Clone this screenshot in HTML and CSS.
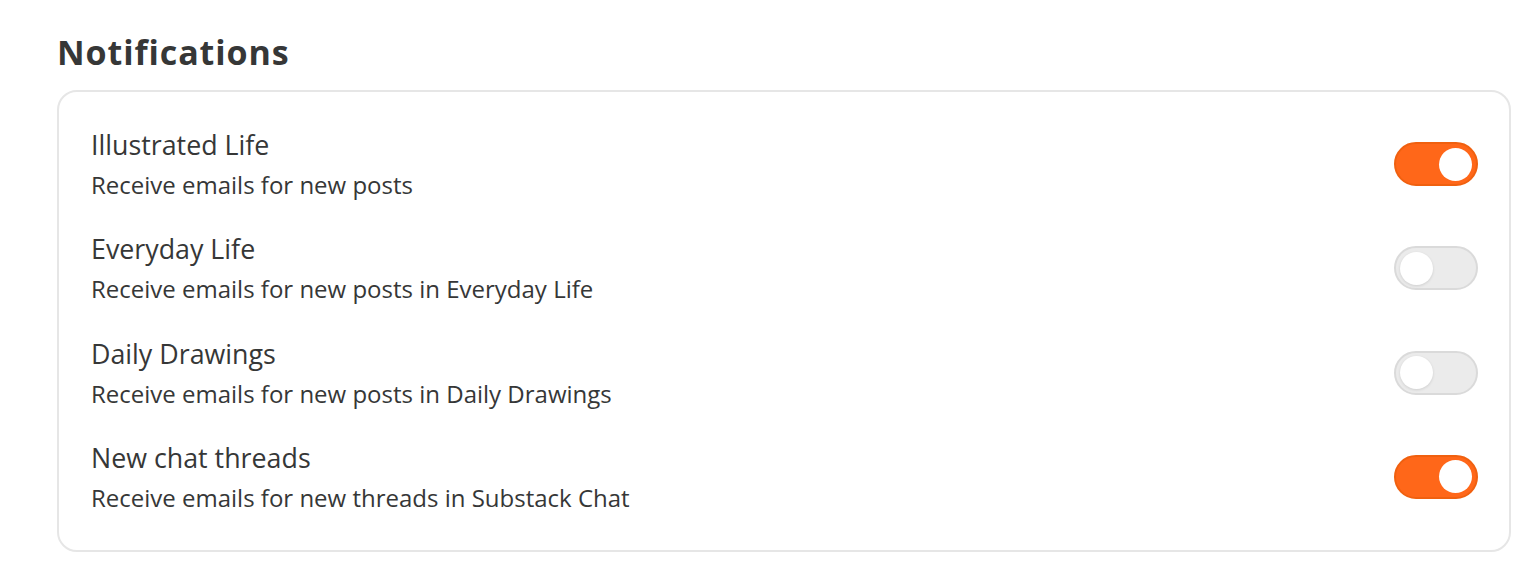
FILE: index.html
```html
<!DOCTYPE html>
<html>
<head>
<meta charset="utf-8">
<link rel="stylesheet" href="styles.css">
</head>
<body>
<div class="page">
  <h1 class="heading">Notifications</h1>
  <div class="card">
    <div class="row">
      <div class="text">
        <div class="title">Illustrated Life</div>
        <div class="desc">Receive emails for new posts</div>
      </div>
      <div class="toggle on"><div class="knob"></div></div>
    </div>
    <div class="row">
      <div class="text">
        <div class="title">Everyday Life</div>
        <div class="desc">Receive emails for new posts in Everyday Life</div>
      </div>
      <div class="toggle"><div class="knob"></div></div>
    </div>
    <div class="row">
      <div class="text">
        <div class="title">Daily Drawings</div>
        <div class="desc">Receive emails for new posts in Daily Drawings</div>
      </div>
      <div class="toggle"><div class="knob"></div></div>
    </div>
    <div class="row">
      <div class="text">
        <div class="title">New chat threads</div>
        <div class="desc">Receive emails for new threads in Substack Chat</div>
      </div>
      <div class="toggle on"><div class="knob"></div></div>
    </div>
  </div>
</div>
</body>
</html>
```
FILE: styles.css
```css
* { box-sizing: border-box; }
html, body { margin: 0; background: #fff; }
body {
  font-family: "Open Sans", "Noto Sans", "Liberation Sans", sans-serif;
  color: #363737;
}
.page {
  padding: 30px 19px 0 57px;
}
.heading {
  margin: 0 0 16px 0;
  font-size: 34px;
  font-weight: 700;
  line-height: 44px;
  letter-spacing: 0.9px;
}
.card {
  border: 2px solid #e6e6e6;
  border-radius: 20px;
  padding: 35px 31px 36px 32px;
  display: flex;
  flex-direction: column;
  gap: 30.3px;
}
.row {
  display: flex;
  align-items: center;
  justify-content: space-between;
}
.text { display: flex; flex-direction: column; gap: 6px; }
.title {
  font-size: 26.8px;
  line-height: 36px;
}
.desc {
  font-size: 24px;
  line-height: 32px;
}
.toggle {
  width: 84px;
  height: 44px;
  border-radius: 22px;
  background: #ebebeb;
  border: 2px solid #dadada;
  display: flex;
  align-items: center;
  padding: 0 4px;
}
.toggle .knob {
  width: 33px;
  height: 33px;
  border-radius: 50%;
  background: #fff;
  box-shadow: 0 1px 3px rgba(0,0,0,0.12);
}
.toggle.on {
  background: #ff6719;
  border-color: #f0600f;
  justify-content: flex-end;
}
.toggle.on .knob { box-shadow: none; }
```
